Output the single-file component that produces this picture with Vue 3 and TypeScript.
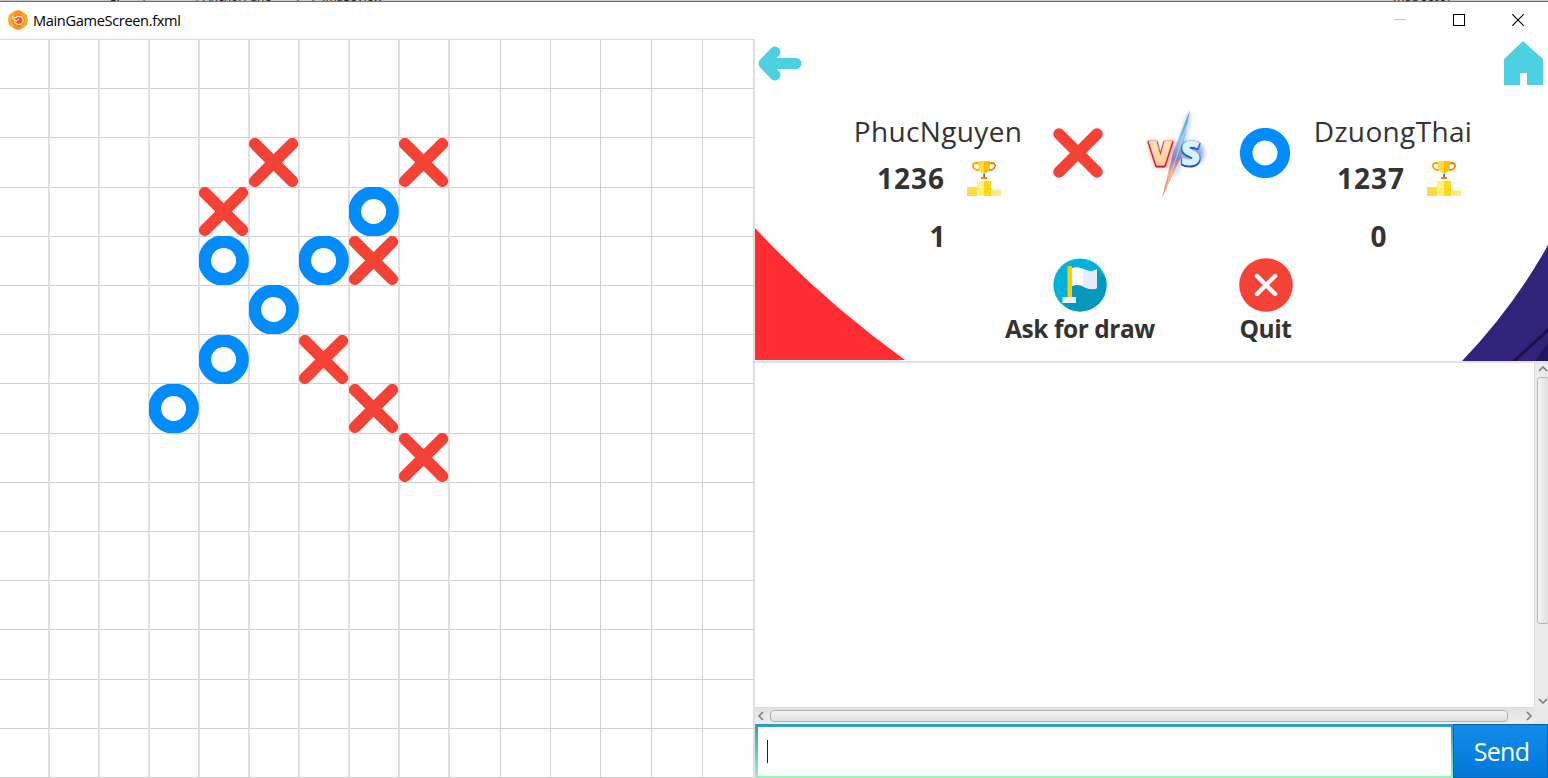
<script setup lang="ts">
type Mark = 'x' | 'o' | null

interface Player {
  name: string
  rating: number
  score: number
  side: 'left' | 'right'
}

const ROWS = 15
const COLS = 15

const moves: Record<string, Mark> = {
  '2-5': 'x', '2-8': 'x', '3-4': 'x', '4-7': 'x', '6-6': 'x', '7-7': 'x', '8-8': 'x',
  '3-7': 'o', '4-4': 'o', '4-6': 'o', '5-5': 'o', '6-4': 'o', '7-3': 'o',
}

const cells = Array.from({ length: ROWS * COLS }, (_, i) => {
  const key = `${Math.floor(i / COLS)}-${i % COLS}`
  return { key, mark: moves[key] ?? null }
})

const players: Player[] = [
  { name: 'PhucNguyen', rating: 1236, score: 1, side: 'left' },
  { name: 'DzuongThai', rating: 1237, score: 0, side: 'right' },
]
</script>

<template>
  <div class="window">
    <div class="backdrop">
      <span class="peek p0">g. | ▪ |</span>
      <span class="peek p1">AnchorPane</span>
      <span class="peek p2">/ \ ImageView</span>
      <span class="peek p3">Inspector</span>
    </div>

    <header class="titlebar">
      <svg class="app-icon" viewBox="0 0 20 20">
        <path d="M10 0 L15 2 L19 5 L20 10 L19 15 L15 18 L10 20 L5 18 L1 15 L0 10 L1 5 L5 2Z" fill="#f9ac19" />
        <path d="M10 0 L15 2 L13 5 L7 5 L5 2Z M10 20 L5 18 L7 16 H13 L15 18Z" fill="#f39a1c" />
        <circle cx="10.3" cy="10.3" r="6.4" fill="#ff7c2c" />
        <path d="M8 7 L13 8 L14 12 L10 14 L7 11Z" fill="#f2501e" />
        <path d="M4.5 6.5 L8 8 L9.5 6.2 L14 7 L15.5 10.5 L13.5 14 L9.5 14.5 L6.5 12 L7 9.5 M4.5 6.5 L5 9 L8.5 11 L11 9" fill="none" stroke="#fff0dc" stroke-width="1.1" stroke-linejoin="round" />
      </svg>
      <span class="title">MainGameScreen.fxml</span>
      <div class="controls">
        <svg viewBox="0 0 12 12"><path d="M0 5.5H12" stroke="#c8c8c8" /></svg>
        <svg viewBox="0 0 12 12"><rect x=".5" y=".5" width="11" height="11" fill="none" stroke="#000" /></svg>
        <svg viewBox="0 0 12 12"><path d="M.3 .3L11.7 11.7M11.7 .3L.3 11.7" stroke="#000" stroke-width="1.1" /></svg>
      </div>
    </header>

    <main class="content">
      <section class="board">
        <div v-for="cell in cells" :key="cell.key" class="cell">
          <svg v-if="cell.mark === 'x'" class="mark" viewBox="0 0 50 50" preserveAspectRatio="none">
            <path d="M6 6L44 44M44 6L6 44" stroke="#f44336" stroke-width="12.2" stroke-linecap="round" />
          </svg>
          <svg v-else-if="cell.mark === 'o'" class="mark" viewBox="0 0 50 50" preserveAspectRatio="none">
            <circle cx="25" cy="25" r="19.2" fill="#fff" stroke="#008cff" stroke-width="13" />
          </svg>
        </div>
      </section>

      <section class="side">
        <div class="match">
          <svg class="corner-red" viewBox="0 0 150 132">
            <path d="M0 0Q67 72 150 132H0Z" fill="#ff2d32" />
          </svg>
          <svg class="corner-navy" viewBox="0 0 86 116">
            <path d="M86 0Q51 63 0 116H86Z" fill="#30247a" />
            <path d="M86 97L73 116H86Z" fill="#20165d" />
            <path d="M51 117L87 84" stroke="#1c1240" stroke-width="3" />
          </svg>

          <nav class="nav">
            <svg class="back" viewBox="0 0 44 35">
              <path d="M17 6L6 17.5L17 29M8 17.5H38" fill="none" stroke="#4dd0e1" stroke-width="11" stroke-linecap="round" stroke-linejoin="round" />
            </svg>
            <svg class="home" viewBox="0 0 39 44">
              <path d="M19 0L39 18V44H23V32H16V44H0V18Z" fill="#4dd0e1" />
            </svg>
          </nav>

          <div class="versus">
            <div v-for="p in players" :key="p.name" class="player" :class="p.side">
              <div class="name">{{ p.name }}</div>
              <div class="rating">
                <span class="num">{{ p.rating }}</span>
                <svg class="trophy" viewBox="0 0 34 35">
                  <path d="M11 2H9C4 2 5 9 12 9" fill="none" stroke="#ff9f00" stroke-width="1.8" />
                  <path d="M23 2H25C30 2 29 9 22 9" fill="none" stroke="#ff7e00" stroke-width="1.8" />
                  <path d="M11 0H17V13C14 12 11 9 11 5Z" fill="#fedb41" />
                  <path d="M17 0H23V5C23 9 20 12 17 13Z" fill="#fac100" />
                  <path d="M16.3 13H18V16H16.3Z" fill="#54616e" />
                  <path d="M14 16H20V18H14Z" fill="#ff7e00" />
                  <path d="M0 26H10V35H0Z" fill="#fedb41" />
                  <path d="M10 20H17V35H10Z" fill="#fff477" />
                  <path d="M17 20H24V35H17Z" fill="#ffd913" />
                  <path d="M24 29H34V35H24Z" fill="#ffe98a" />
                </svg>
              </div>
              <div class="num score">{{ p.score }}</div>
            </div>

            <svg class="badge badge-x" viewBox="0 0 50 50">
              <path d="M6 6L44 44M44 6L6 44" stroke="#f44336" stroke-width="11.6" stroke-linecap="round" />
            </svg>
            <svg class="vs" viewBox="0 0 64 96">
              <defs>
                <linearGradient id="bolt" x1="0" y1="0" x2="0" y2="1">
                  <stop offset="0" stop-color="#4a9be0" />
                  <stop offset=".35" stop-color="#8cc4ea" />
                  <stop offset=".55" stop-color="#8c7ec0" />
                  <stop offset=".72" stop-color="#ffad7a" />
                  <stop offset="1" stop-color="#f0806c" />
                </linearGradient>
                <linearGradient id="vfill" x1="0" y1="0" x2="0" y2="1">
                  <stop offset="0" stop-color="#fff0cf" />
                  <stop offset="1" stop-color="#ffc488" />
                </linearGradient>
                <filter id="soft" x="-60%" y="-60%" width="220%" height="220%"><feGaussianBlur stdDeviation="2" /></filter>
              </defs>
              <path d="M44 10L30 70L36 50Z" fill="#5a6ff0" stroke="#7387ec" stroke-width="5" opacity=".4" filter="url(#soft)" />
              <path d="M7 37L13 59L20 59L27 37" fill="none" stroke="#ff3030" stroke-width="8" opacity=".5" filter="url(#soft)" />
              <circle cx="47" cy="49" r="12" fill="#4d63ff" opacity=".55" filter="url(#soft)" />
              <path d="M45 6L36 53L17 94L28 48Z" fill="url(#bolt)" />
              <path d="M42 21L32 51L22 83" fill="none" stroke="#c5ecff" stroke-width="1" opacity=".6" />
              <text x="4" y="62" class="vs-v" fill="#a51423" stroke="#c2182e" stroke-width="3">V</text>
              <text x="4" y="60.5" class="vs-v" fill="url(#vfill)" stroke="#ffd9a4" stroke-width=".8">V</text>
              <text x="36" y="62" class="vs-s" fill="#183894" stroke="#2954bb" stroke-width="3">S</text>
              <text x="36" y="60.5" class="vs-s" fill="#d8f5ff" stroke="#d8f5ff" stroke-width=".8">S</text>
            </svg>
            <svg class="badge badge-o" viewBox="0 0 50 50">
              <circle cx="25" cy="25" r="18.8" fill="#fff" stroke="#008cff" stroke-width="12.6" />
            </svg>
          </div>

          <div class="actions">
            <div class="action draw">
              <svg viewBox="0 0 54 54">
                <defs><clipPath id="disc"><circle cx="27" cy="27" r="26.6" /></clipPath></defs>
                <circle cx="27" cy="27" r="26.6" fill="#00b1dc" />
                <path d="M44 11L70 37V70H30L10 45L19 29Z" fill="#0699bd" clip-path="url(#disc)" />
                <path d="M14.5 8H19V40H14.5Z" fill="#ffcc05" />
                <path d="M19 10C24 8 29 10 33 12C37 14 41 13 44 11V30C41 32 37 31 33 30C28 27 24 26 19 28Z" fill="#fff" />
                <path d="M30 11C35 14 40 14 44 11V30C40 32 35 31 30 28Z" fill="#e7ecf7" />
                <path d="M9.5 39H23V45H9.5Z" fill="#edf1fa" />
              </svg>
              <span>Ask for draw</span>
            </div>
            <div class="action quit">
              <svg viewBox="0 0 54 54">
                <circle cx="27" cy="27" r="26.8" fill="#f44336" />
                <path d="M18 18L36 36M36 18L18 36" stroke="#fff" stroke-width="4.4" stroke-linecap="round" />
              </svg>
              <span>Quit</span>
            </div>
          </div>
        </div>

        <div class="chat">
          <div class="log"></div>
          <div class="vbar">
            <svg class="chev-v" viewBox="0 0 10 6"><path d="M1 5L5 1L9 5" /></svg>
            <div class="vthumb"></div>
            <div class="grow"></div>
            <svg class="chev-v" viewBox="0 0 10 6"><path d="M1 1L5 5L9 1" /></svg>
          </div>
          <div class="hbar">
            <svg class="chev-h" viewBox="0 0 6 10"><path d="M5 1L1 5L5 9" /></svg>
            <div class="hthumb"></div>
            <svg class="chev-h" viewBox="0 0 6 10"><path d="M1 1L5 5L1 9" /></svg>
          </div>
          <div class="junction"></div>
        </div>

        <div class="composer">
          <div class="field"><div class="input"><i class="caret"></i></div></div>
          <button class="send">Send</button>
        </div>
      </section>
    </main>
  </div>
</template>

<style>
body { margin: 0; overflow: hidden; }
</style>

<style scoped>
.window {
  width: 1548px;
  height: 778px;
  overflow: hidden;
  display: flex;
  flex-direction: column;
  background: #fff;
  color: #333;
  font-family: "Open Sans", "Noto Sans", sans-serif;
}
svg { display: block; flex: none; }

.backdrop {
  position: relative;
  flex: none;
  height: 2px;
  box-sizing: border-box;
  overflow: hidden;
  background: #c6c6c6;
  border-bottom: 1px solid #707070;
}
.peek {
  position: absolute;
  bottom: -4px;
  font-size: 12px;
  line-height: 16px;
  color: #222;
  white-space: nowrap;
}
.p0 { left: 110px; word-spacing: 18px; }
.p1 { left: 203px; }
.p2 { left: 297px; word-spacing: 5px; }
.p3 { left: 1393px; letter-spacing: .8px; }

.titlebar {
  flex: none;
  height: 37px;
  box-sizing: border-box;
  display: flex;
  align-items: center;
  padding: 0 0 1px 8px;
}
.app-icon { width: 20px; height: 20px; }
.title { margin: -1px 0 0 5px; font-size: 14.6px; line-height: 20px; color: #000; letter-spacing: -.35px; }
.controls { margin-left: auto; display: flex; gap: 47px; padding-right: 24px; }
.controls svg { width: 12px; height: 12px; }

.content { flex: 1; display: flex; min-height: 0; }
.board {
  flex: none;
  width: 755px;
  height: 739px;
  box-sizing: border-box;
  border-top: 1px solid #dcdcdc;
  display: grid;
  grid-template-columns: repeat(9, 50px) 51px 50px 50px 51px 51px 52px;
  grid-template-rows: repeat(15, 1fr);
}
.cell {
  box-sizing: border-box;
  border-right: 2px solid #e0e0e0;
  border-bottom: 1px solid #d0d0d0;
  min-height: 0;
  position: relative;
}
.cell:nth-child(15n + 10), .cell:nth-child(15n + 11), .cell:nth-child(15n + 12),
.cell:nth-child(15n + 13), .cell:nth-child(15n + 14) { border-right: 1px solid #d0d0d0; }
.mark { position: absolute; top: -.6px; left: -.6px; width: 49.2px; height: 49px; z-index: 1; }

.side { flex: 1; display: flex; flex-direction: column; min-width: 0; }
.match {
  position: relative;
  flex: none;
  height: 324px;
  box-sizing: border-box;
  border-bottom: 2px solid #e2e2e2;
  overflow: hidden;
}
.corner-red { position: absolute; left: 0; bottom: 1px; width: 150px; height: 132px; }
.corner-navy { position: absolute; right: 0; bottom: 0; width: 86px; height: 116px; }
.nav { display: flex; justify-content: space-between; padding: 2px 5px 0 3px; height: 55px; }
.back { width: 44px; height: 35px; margin-top: 5px; }
.home { width: 39px; height: 44px; }

.versus {
  display: grid;
  grid-template-columns: 198px 82px 112px 68px 188px;
  padding-left: 84px;
  height: 160px;
}
.player { grid-row: 1; display: flex; flex-direction: column; align-items: center; }
.player.left { grid-column: 1; }
.player.right { grid-column: 5; }
.name { height: 47px; line-height: 70px; font-size: 28px; white-space: nowrap; letter-spacing: .35px; }
.rating { display: flex; align-items: center; gap: 22px; height: 47px; margin-top: 11px; }
.num { font-size: 28px; font-weight: 700; line-height: 36px; }
.rating .num { letter-spacing: 1px; }
.trophy { width: 34px; height: 35px; margin-top: 2px; }
.left .rating { padding-left: 2px; }
.right .rating { padding-left: 12px; }
.score { margin-top: 17px; }
.left .score { margin-right: 1px; }
.right .score { margin-right: 29px; }
.badge { width: 50px; height: 50px; margin-top: 32px; grid-row: 1; justify-self: center; }
.badge-x { grid-column: 2; }
.badge-o { grid-column: 4; }
.vs { grid-row: 1; grid-column: 3; justify-self: center; width: 64px; height: 96px; margin: 8px 0 0 3px; overflow: visible; }
.vs text { font-family: "Open Sans", sans-serif; font-weight: 800; font-size: 33px; stroke-linejoin: round; }

.actions { display: flex; padding: 2px 0 0 225px; }
.action { display: flex; flex-direction: column; align-items: center; }
.action svg { width: 54px; height: 54px; }
.action span { font-size: 24.5px; line-height: 34px; font-weight: 700; white-space: nowrap; letter-spacing: -.45px; }
.draw { width: 200px; }
.quit { width: 171px; }

.chat {
  height: 361px;
  flex: none;
  display: grid;
  grid-template-columns: 1fr 14px;
  grid-template-rows: 344px 17px;
}
.vbar {
  display: flex;
  flex-direction: column;
  align-items: center;
  box-sizing: border-box;
  border-left: 1px solid #dadada;
  background: #ebebeb;
  padding: 3px 0 3px 2px;
}
.chev-v { width: 10px; height: 6px; }
.chev-h { width: 6px; height: 10px; }
.chev-v path, .chev-h path { fill: none; stroke: #777; stroke-width: 1.5; }
.vthumb {
  width: 12px;
  height: 247px;
  box-sizing: border-box;
  margin-top: 5px;
  flex: none;
  border: 1px solid #b5b5b5;
  border-radius: 3px;
  background: linear-gradient(90deg, #f5f5f5, #dedede);
}
.grow { flex: 1; }
.hbar {
  display: flex;
  align-items: center;
  box-sizing: border-box;
  border-top: 1px solid #dadada;
  background: linear-gradient(#e1e1e1, #efefef);
  padding: 0 2px 0 3px;
}
.hthumb {
  width: 738px;
  height: 12px;
  box-sizing: border-box;
  margin: 0 auto 0 6px;
  border: 1px solid #b0b0b0;
  border-radius: 4px;
  background: linear-gradient(#f6f6f6, #dedede);
}
.junction { background: #e8e8e8; }

.composer { height: 54px; display: flex; }
.field {
  width: 698px;
  box-sizing: border-box;
  padding: 3px 2px 2px 3px;
  background: linear-gradient(#2a9dbd, #93fbb5);
}
.input { height: 100%; background: #fff; display: flex; align-items: center; }
.caret { width: 1px; height: 23px; margin-left: 9px; background: #222; }
.send {
  flex: 1;
  border: 1px solid #0563b1;
  padding: 0 0 0 2px;
  background: linear-gradient(#118bea, #0279da);
  color: #fff;
  font: 25px "Open Sans", "Noto Sans", sans-serif;
  letter-spacing: -.7px;
}
</style>
